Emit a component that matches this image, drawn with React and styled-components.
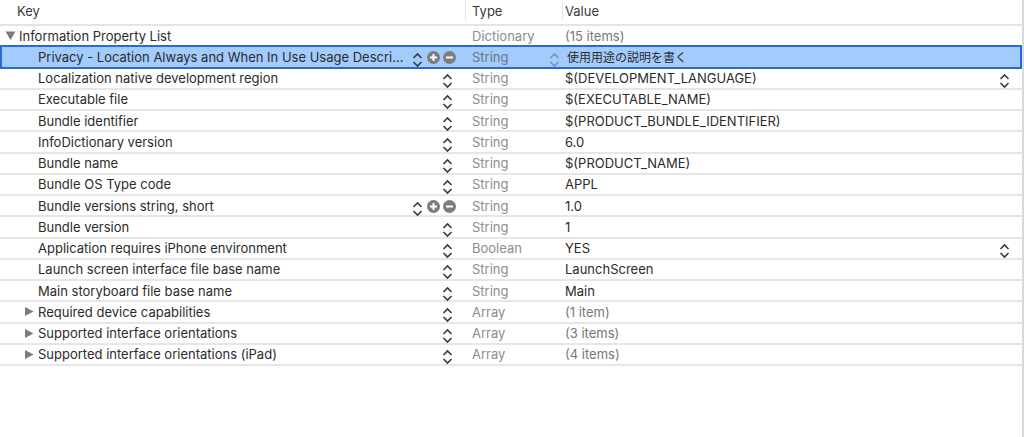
import React from 'react'
import styled, { createGlobalStyle } from 'styled-components'

const Global = createGlobalStyle`
  html, body {
    margin: 0;
    background: #fff;
  }
  body {
    font-family: "Inter", "Liberation Sans", "Noto Sans CJK JP", sans-serif;
    font-size: 13px;
    color: #2b2b2b;
  }
`

const COLS = '465px 95px 1fr'

const Page = styled.div`
  width: 1024px;
  height: 437px;
  overflow: hidden;
  display: flex;
  flex-direction: column;
  border-right: 2px solid #d9d9d9;
  box-sizing: border-box;
`

const Header = styled.div`
  display: grid;
  grid-template-columns: 465px 97px 1fr;
  flex: none;
  height: 26px;
  box-sizing: border-box;
  border-bottom: 2px solid #e4e4e4;
`

const HeaderCell = styled.div`
  display: flex;
  align-items: center;
  height: 20px;
  margin-top: 1px;
  padding-left: ${p => p.$pad}px;
  border-left: ${p => (p.$first ? 'none' : '1px solid #e6e6e6')};
  color: #3a3a3a;
`

const Row = styled.div`
  display: grid;
  grid-template-columns: ${COLS};
  align-items: center;
  flex: none;
  height: 21.25px;
  box-sizing: border-box;
  border-bottom: 2px solid ${p => (p.$selected ? '#2a69d8' : '#e6e6e6')};
  background: ${p => (p.$selected ? '#a3cbfb' : '#fff')};
  box-shadow: ${p =>
    p.$selected
      ? 'inset 2px 0 0 #2a69d8, inset -2px 0 0 #2a69d8, 0 -2px 0 #2a69d8'
      : 'none'};
`

const KeyCell = styled.div`
  display: flex;
  align-items: center;
  padding-left: ${p => p.$indent}px;
  height: 100%;
  min-width: 0;
`

const Disclosure = styled.span`
  display: flex;
  width: 14px;
  margin-left: -14px;
  flex: none;
`

const KeyText = styled.span`
  flex: 1;
  white-space: nowrap;
  overflow: hidden;
`

const Controls = styled.span`
  display: flex;
  align-items: center;
  gap: 3.5px;
  margin-right: ${p => p.$right}px;
`

const TypeCell = styled.div`
  padding-left: 7px;
  color: ${p => (p.$selected ? '#6b7686' : '#8c8c8c')};
  display: flex;
  align-items: center;
  justify-content: space-between;
`

const ValueCell = styled.div`
  display: flex;
  align-items: center;
  justify-content: space-between;
  padding-left: 5px;
  padding-right: 12px;
  color: ${p => (p.$muted ? '#777' : '#2b2b2b')};
  white-space: nowrap;
`

const JapaneseText = styled.span`
  font-size: 12px;
  margin-left: 2px;
`

const ChevronIcon = styled.svg`
  flex: none;
  transform: translateY(3px);
`

const RoundIcon = styled.svg`
  flex: none;
  transform: translateY(1px);
`

const Chevrons = ({ color = '#3c3c3c' }) => (
  <ChevronIcon width="11" height="16" viewBox="0 0 11 16" fill="none" stroke={color} strokeWidth="1.6">
    <path d="M1.5 6 5.5 2l4 4" />
    <path d="M1.5 10l4 4 4-4" />
  </ChevronIcon>
)

const RoundButton = ({ minus }) => (
  <RoundIcon width="13" height="13" viewBox="0 0 13 13">
    <circle cx="6.5" cy="6.5" r="6.5" fill="#7d7d7d" />
    <path d={minus ? 'M3 6.5h7' : 'M3 6.5h7M6.5 3v7'} stroke="#fff" strokeWidth="2" />
  </RoundIcon>
)

const Triangle = ({ down }) => (
  <svg width="11" height="11" viewBox="0 0 11 11">
    <path d={down ? 'M0.5 1.5h10L5.5 10z' : 'M1 1v9L9.5 5.5z'} fill="#7b7b7b" />
  </svg>
)

const items = [
  { key: 'Privacy - Location Always and When In Use Usage Descri...', type: 'String', value: <JapaneseText>使用用途の説明を書く</JapaneseText>, selected: true },
  { key: 'Localization native development region', type: 'String', value: '$(DEVELOPMENT_LANGUAGE)', popup: true },
  { key: 'Executable file', type: 'String', value: '$(EXECUTABLE_NAME)' },
  { key: 'Bundle identifier', type: 'String', value: '$(PRODUCT_BUNDLE_IDENTIFIER)' },
  { key: 'InfoDictionary version', type: 'String', value: '6.0' },
  { key: 'Bundle name', type: 'String', value: '$(PRODUCT_NAME)' },
  { key: 'Bundle OS Type code', type: 'String', value: 'APPL' },
  { key: 'Bundle versions string, short', type: 'String', value: '1.0', hover: true },
  { key: 'Bundle version', type: 'String', value: '1' },
  { key: 'Application requires iPhone environment', type: 'Boolean', value: 'YES', popup: true },
  { key: 'Launch screen interface file base name', type: 'String', value: 'LaunchScreen' },
  { key: 'Main storyboard file base name', type: 'String', value: 'Main' },
  { key: 'Required device capabilities', type: 'Array', value: '(1 item)', group: true },
  { key: 'Supported interface orientations', type: 'Array', value: '(3 items)', group: true },
  { key: 'Supported interface orientations (iPad)', type: 'Array', value: '(4 items)', group: true },
]

const ItemRow = ({ item }) => {
  const active = item.selected || item.hover
  return (
    <Row $selected={item.selected}>
      <KeyCell $indent={38}>
        {item.group && (
          <Disclosure>
            <Triangle />
          </Disclosure>
        )}
        <KeyText>{item.key}</KeyText>
        {active ? (
          <Controls $right={9}>
            <Chevrons />
            <RoundButton />
            <RoundButton minus />
          </Controls>
        ) : (
          <Controls $right={12}>
            <Chevrons />
          </Controls>
        )}
      </KeyCell>
      <TypeCell $selected={item.selected}>
        {item.type}
        {item.selected && <Chevrons color="#7f93ad" />}
      </TypeCell>
      <ValueCell $muted={item.group}>
        {item.value}
        {item.popup && <Chevrons />}
      </ValueCell>
    </Row>
  )
}

export default function App() {
  return (
    <Page>
      <Global />
      <Header>
        <HeaderCell $first $pad={17}>Key</HeaderCell>
        <HeaderCell $pad={6}>Type</HeaderCell>
        <HeaderCell $pad={2}>Value</HeaderCell>
      </Header>
      <Row>
        <KeyCell $indent={19}>
          <Disclosure>
            <Triangle down />
          </Disclosure>
          <KeyText>Information Property List</KeyText>
        </KeyCell>
        <TypeCell>Dictionary</TypeCell>
        <ValueCell $muted>(15 items)</ValueCell>
      </Row>
      {items.map(item => (
        <ItemRow key={item.key} item={item} />
      ))}
    </Page>
  )
}
